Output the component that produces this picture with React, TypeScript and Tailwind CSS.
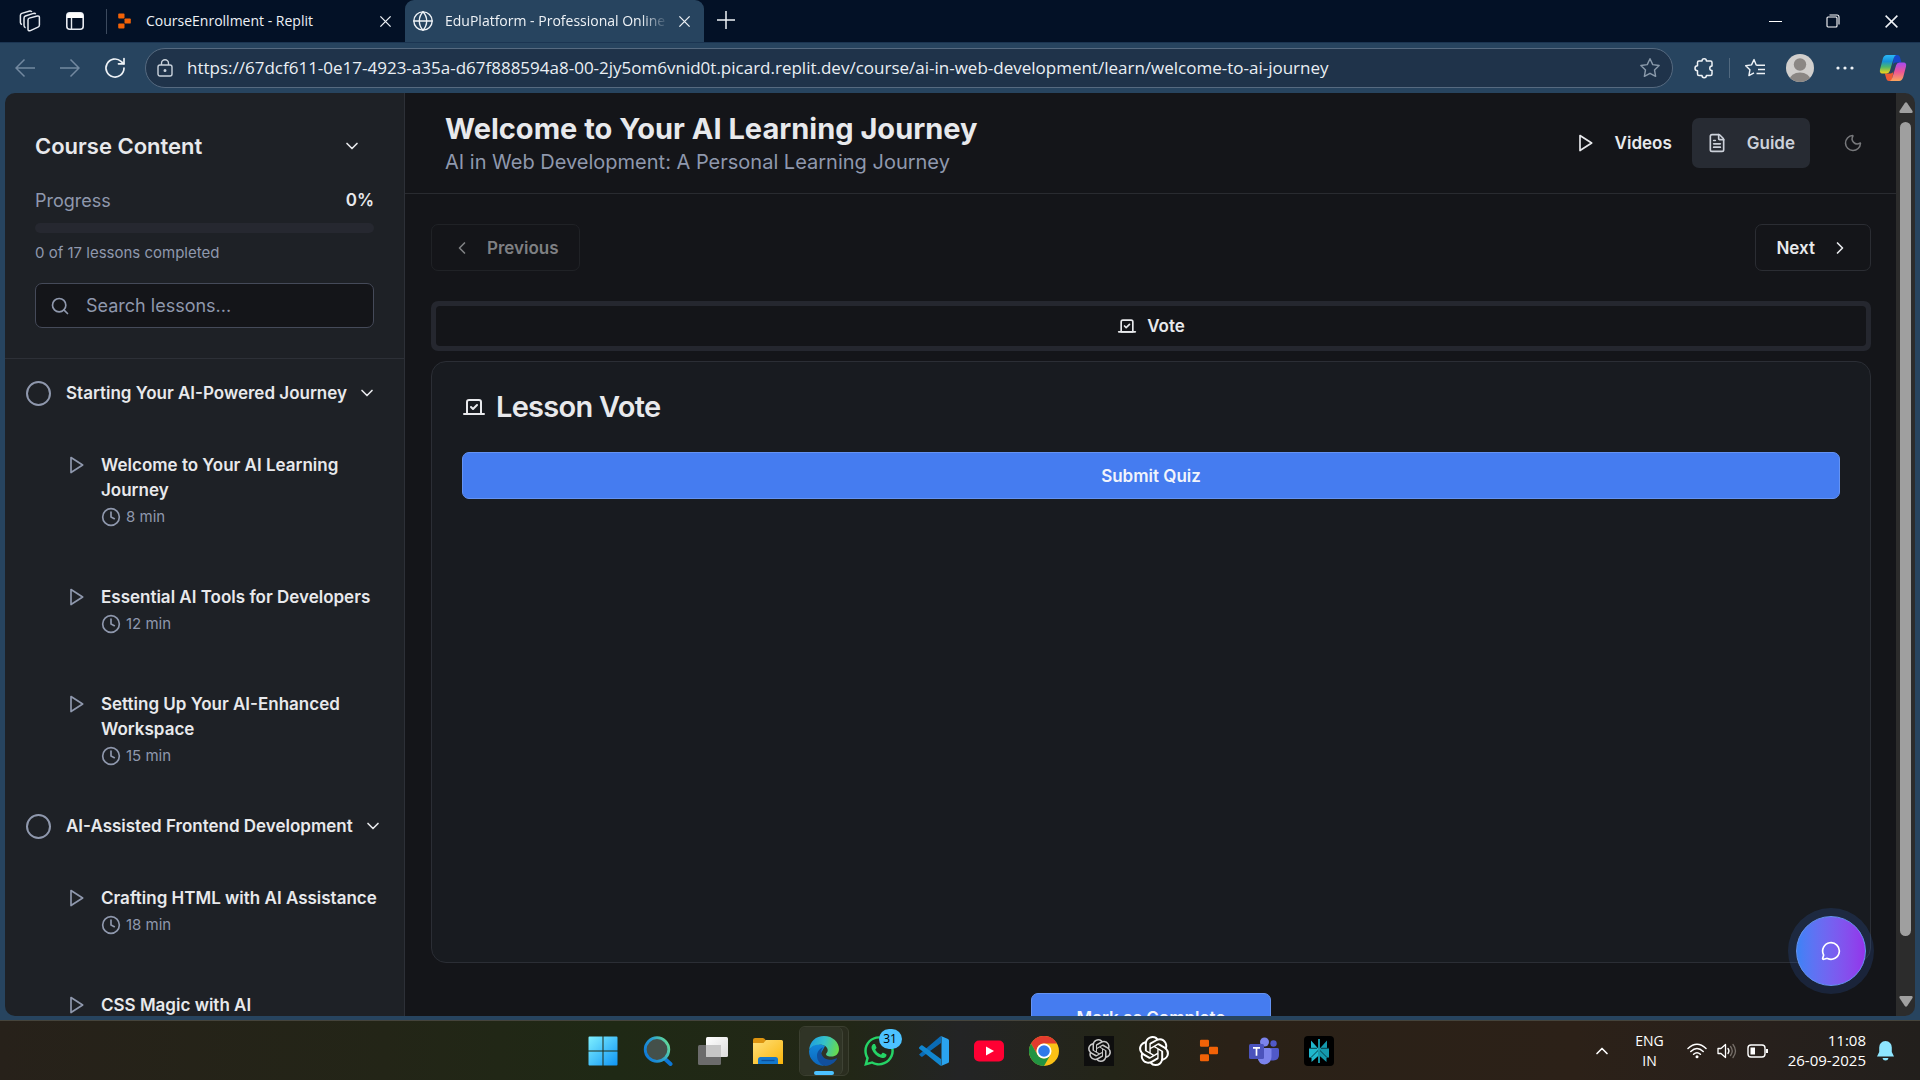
import { useState, type ReactNode } from "react";
import { Vote, Search, Clock, ChevronDown, ChevronLeft, ChevronRight, ChevronUp, FileText, MessageCircle, Globe, Moon } from "lucide-react";
import { SiOpenai } from "react-icons/si";
import { FaWhatsapp } from "react-icons/fa";

const ui = "font-['Open_Sans','Noto_Sans',sans-serif]";

function PlayIcon({ className = "" }: { className?: string }) {
  return (
    <svg viewBox="0 0 24 24" fill="none" stroke="currentColor" strokeWidth="2" strokeLinecap="round" strokeLinejoin="round" className={`size-5 shrink-0 ${className}`}>
      <polygon points="6 3 20 12 6 21 6 3" />
    </svg>
  );
}

function ReplitIcon({ className = "" }: { className?: string }) {
  return (
    <svg viewBox="0 0 24 28" fill="#f26207" className={className}>
      <rect x="1" y="1" width="11" height="8.5" rx="1.5" />
      <rect x="12" y="9.5" width="11" height="9" rx="1.5" />
      <rect x="1" y="18.5" width="11" height="8.5" rx="1.5" />
    </svg>
  );
}

function WorkspacesIcon() {
  return (
    <svg viewBox="0 0 22 22" fill="none" stroke="#e6eaf0" strokeWidth="1.5" strokeLinejoin="round" className="size-[22px]">
      <path d="M9 10 Q9 8.6 10.3 8.1L18.2 6Q20.4 5.6 20.4 7.6V15Q20.4 16.6 19 17.1L11.4 20.6Q9 21.4 9 19.2Z" />
      <path d="M6.6 17.8Q5 17.3 5 15.6V8.2Q5 6.6 6.4 6L14.5 3.4Q16.2 3 16.6 4.2" />
      <path d="M3 14.6Q1.4 14 1.4 12.6V5.4Q1.4 4 2.8 3.4L10.8 1Q12.3 .7 12.8 2" />
    </svg>
  );
}

function TabPaneIcon() {
  return (
    <svg viewBox="0 0 20 20" className="size-5">
      <rect x="1.8" y="1.8" width="16.4" height="16.4" rx="3" fill="none" stroke="#e6eaf0" strokeWidth="1.6" />
      <path d="M2 4.5Q2 2 4.5 2h11Q18 2 18 4.5V7H2Z" fill="#fff" />
      <path d="M6.5 7v11" stroke="#e6eaf0" strokeWidth="1.4" />
    </svg>
  );
}

function CloseIcon({ className = "" }: { className?: string }) {
  return (
    <svg viewBox="0 0 14 14" fill="none" stroke="#eef2f6" strokeWidth="1.4" className={className}>
      <path d="M1.5 1.5 12.5 12.5M12.5 1.5 1.5 12.5" />
    </svg>
  );
}

function CopilotIcon() {
  return (
    <svg viewBox="0 0 28 28" className="size-7">
      <defs>
        <linearGradient id="cpA" x1="0" y1="0" x2="0" y2="1">
          <stop offset="0" stopColor="#2bb8f5" />
          <stop offset=".35" stopColor="#1691d8" />
          <stop offset=".65" stopColor="#4db86b" />
          <stop offset="1" stopColor="#f4d418" />
        </linearGradient>
        <linearGradient id="cpB" x1="0" y1="0" x2="0" y2="1">
          <stop offset="0" stopColor="#a64af0" />
          <stop offset=".5" stopColor="#ec5596" />
          <stop offset="1" stopColor="#fba65c" />
        </linearGradient>
      </defs>
      <path d="M15 1h3.2q2 0 2.7 2l1.6 5.4h-5.6q-2.3 0-3 2.3Z" fill="#1747c8" />
      <path d="M13 27H10q-2 0-2.6-2l-1.6-5.4h5.6q2.3 0 3-2.3Z" fill="#ee5a34" />
      <path d="M7.8 1h9.4q-1.7.6-2.5 3.2l-3.8 12.6q-.8 2.6-3.4 2.6H3.2q-3-.3-2.2-4L3.8 4.7Q5 1 7.8 1Z" fill="url(#cpA)" />
      <path d="M20.2 27h-9.4q1.7-.6 2.5-3.2l3.8-12.6q.8-2.6 3.4-2.6h4.3q3 .3 2.2 4l-2.8 10.7Q23 27 20.2 27Z" fill="url(#cpB)" />
    </svg>
  );
}

function BrowserTabs() {
  return (
    <div className="flex h-[42px] shrink-0 items-stretch bg-[#031126]">
      <div className="flex w-[107px] items-center pl-[19px]">
        <button aria-label="Workspaces"><WorkspacesIcon /></button>
        <button aria-label="Tab actions" className="ml-6"><TabPaneIcon /></button>
        <span className="ml-auto h-[25px] w-px bg-[#3c4a5e]" />
      </div>
      <div className="flex w-[298px] items-center pr-[13px] pl-[10px]">
        <ReplitIcon className="h-4 w-[15px]" />
        <span className="ml-[14px] pb-0.5 text-[14px] text-[#eef2f6]">CourseEnrollment - Replit</span>
        <button aria-label="Close tab" className="ml-auto"><CloseIcon className="size-[13px]" /></button>
      </div>
      <div className="flex w-[299px] items-center rounded-t-[9px] bg-[#27445f] pr-[13px] pl-[7px]">
        <Globe className="size-[22px] shrink-0 text-[#eef2f6]" strokeWidth={1.5} />
        <span className="ml-[11px] min-w-0 flex-1 overflow-hidden pb-0.5 text-[14px] whitespace-nowrap text-[#eef2f6] [mask-image:linear-gradient(to_right,black_88%,transparent)]">
          EduPlatform - Professional Online
        </span>
        <button aria-label="Close tab" className="ml-[10px]"><CloseIcon className="size-[13px]" /></button>
      </div>
      <button aria-label="New tab" className="flex w-[43px] items-center justify-center pb-0.5">
        <svg viewBox="0 0 18 18" stroke="#eef2f6" strokeWidth="1.5" className="size-[18px]"><path d="M9 0v18M0 9h18" /></svg>
      </button>
      <div className="ml-auto flex">
        <button aria-label="Minimize" className="flex w-[58px] items-center justify-center">
          <span className="h-px w-[13px] bg-white" />
        </button>
        <button aria-label="Restore" className="flex w-[58px] items-center justify-center">
          <svg viewBox="0 0 14 14" fill="none" stroke="#fff" strokeWidth="1.1" className="size-[14px]">
            <rect x="1" y="3" width="10" height="10" rx="1" />
            <path d="M3.5 1H11Q13 1 13 3v7.5" />
          </svg>
        </button>
        <button aria-label="Close" className="flex w-[58px] items-center justify-center">
          <CloseIcon className="size-[15px]" />
        </button>
      </div>
    </div>
  );
}

const starPath = "M10 1.6l2.5 5.3 5.8.8-4.2 4.1 1 5.8L10 14.8l-5.1 2.8 1-5.8L1.7 7.7l5.8-.8Z";

function AddressBar() {
  const [url, setUrl] = useState("https://67dcf611-0e17-4923-a35a-d67f888594a8-00-2jy5om6vnid0t.picard.replit.dev/course/ai-in-web-development/learn/welcome-to-ai-journey");
  return (
    <div className="flex h-[51px] shrink-0 items-center border-t border-[#1b3552] bg-[#27445f]">
      <button aria-label="Back" className="flex w-[46px] justify-center pl-1">
        <svg viewBox="0 0 20 20" fill="none" stroke="#7389a0" strokeWidth="1.5" className="size-5"><path d="M20 10H1M9.500 1.500 1 10l8.500 8.500" /></svg>
      </button>
      <button aria-label="Forward" className="flex w-[47px] justify-center">
        <svg viewBox="0 0 20 20" fill="none" stroke="#7389a0" strokeWidth="1.5" className="size-5"><path d="M0 10h19M10.500 1.500 19 10l-8.500 8.500" /></svg>
      </button>
      <button aria-label="Refresh" className="flex w-11 justify-center">
        <svg viewBox="0 0 22 22" fill="none" stroke="#eef2f6" strokeWidth="1.7" strokeLinecap="round" className="size-[22px]">
          <path d="M20 11a9 9 0 1 1-3-6.700L19.500 6.500" /><path d="M20 1.500v5.300h-5.500" />
        </svg>
      </button>
      <div className="ml-2 flex h-10 flex-1 items-center rounded-full border border-[#566a80] bg-[#1f334a] pr-[11px] pl-[11px]">
        <svg viewBox="0 0 16 18" fill="none" stroke="#c9d2dc" strokeWidth="1.4" className="h-[18px] w-4 shrink-0">
          <rect x="1" y="6" width="14" height="11" rx="2" /><path d="M4.500 6V4.200a3.500 3.500 0 0 1 7 0V6" /><circle cx="8" cy="11.500" r=".8" fill="#c9d2dc" />
        </svg>
        <input aria-label="Address" value={url} onChange={(e) => setUrl(e.target.value)} className="ml-[14px] min-w-0 flex-1 bg-transparent text-[17px] text-[#eaeff4] outline-none" />
        <button aria-label="Add to favorites">
          <svg viewBox="0 0 20 20" fill="none" stroke="#8a9aab" strokeWidth="1.3" strokeLinejoin="round" className="size-[22px]"><path d={starPath} /></svg>
        </button>
      </div>
      <div className="flex items-center">
        <button aria-label="Extensions" className="ml-5">
          <svg viewBox="0 0 22 22" fill="none" stroke="#eef2f6" strokeWidth="1.5" strokeLinejoin="round" className="size-[22px]">
            <path d="M9 4a2.200 2.200 0 0 1 4.400 0H17.500q1.500 0 1.500 1.500V9a2.200 2.200 0 1 0 0 4.500V17q0 1.500-1.500 1.500H13.400a2.200 2.200 0 0 1-4.400 0H6Q4.500 18.500 4.500 17v-3.200a2.500 2.500 0 0 1 0-5V5.500Q4.500 4 6 4Z" />
          </svg>
        </button>
        <span className="ml-[14px] h-5 w-px bg-[#51697f]" />
        <button aria-label="Favorites" className="ml-[14px]">
          <svg viewBox="0 0 22 20" fill="none" stroke="#eef2f6" strokeWidth="1.4" strokeLinejoin="round" className="h-5 w-[22px]">
            <path d="M13 7.200l-.8-.3L10 1.600 7.500 6.900l-5.800.8 4.200 4.100-1 5.800L10 14.800M12.500 7.200H21M14 11.500h7M12.500 15.500H21" />
          </svg>
        </button>
        <button aria-label="Profile" className="ml-5">
          <svg viewBox="0 0 28 28" className="size-7">
            <clipPath id="av"><circle cx="14" cy="14" r="14" /></clipPath>
            <g clipPath="url(#av)"><rect width="28" height="28" fill="#d1cfcd" /><circle cx="14" cy="10.500" r="6.200" fill="#8b8784" /><ellipse cx="14" cy="26" rx="10.500" ry="7.500" fill="#8b8784" /></g>
          </svg>
        </button>
        <button aria-label="Settings and more" className="ml-[22px]">
          <svg viewBox="0 0 18 4" fill="#eef2f6" className="h-1 w-[18px]"><circle cx="2" cy="2" r="1.600" /><circle cx="9" cy="2" r="1.600" /><circle cx="16" cy="2" r="1.600" /></svg>
        </button>
        <button aria-label="Copilot" className="mr-[13px] ml-[25px]"><CopilotIcon /></button>
      </div>
    </div>
  );
}

const sections = [
  {
    title: "Starting Your AI-Powered Journey",
    lessons: [
      { title: "Welcome to Your AI Learning Journey", time: "8 min" },
      { title: "Essential AI Tools for Developers", time: "12 min" },
      { title: "Setting Up Your AI-Enhanced Workspace", time: "15 min" },
    ],
  },
  {
    title: "AI-Assisted Frontend Development",
    lessons: [
      { title: "Crafting HTML with AI Assistance", time: "18 min" },
      { title: "CSS Magic with AI", time: "20 min" },
    ],
  },
];

function Sidebar() {
  return (
    <aside className="flex w-[400px] shrink-0 flex-col overflow-hidden border-r border-[#2d3037] bg-[#1e2126]">
      <div className="border-b border-[#2d3037] px-[30px] pt-[30px] pb-[30px]">
        <div className="flex h-[45px] items-center justify-between">
          <h2 className="pt-0.5 text-[22px] font-semibold">Course Content</h2>
          <button aria-label="Collapse course content" className="mr-3"><ChevronDown className="size-5" /></button>
        </div>
        <div className="mt-5 flex items-center justify-between leading-[25px]">
          <span className="text-[18px] text-[#8f98ad]">Progress</span>
          <span className="text-[17px] font-semibold">0%</span>
        </div>
        <div role="progressbar" aria-label="Progress" aria-valuenow={0} className="mt-[10px] h-[10px] rounded-full bg-[#262830]" />
        <p className="mt-[10px] text-[15px] leading-5 text-[#8f98ad]">0 of 17 lessons completed</p>
        <label className="mt-5 flex h-[45px] items-center rounded-[7px] border border-[#454a59] bg-[#141519] pl-[14px]">
          <Search className="size-5 shrink-0 text-[#8f98ad]" />
          <input aria-label="Search lessons" placeholder="Search lessons..." className="ml-4 min-w-0 flex-1 bg-transparent text-[18px] outline-none placeholder:text-[#8f98ad]" />
        </label>
      </div>
      <nav className="pt-[3px]">
        {sections.map((s) => (
          <section key={s.title}>
            <button className="flex h-[62px] w-full items-center pl-[21px] text-left">
              <span className="size-[25px] shrink-0 rounded-full border-2 border-[#8f98ad]" />
              <span className="ml-[15px] pt-0.5 text-[17px] font-semibold whitespace-nowrap">{s.title}</span>
              <ChevronDown className="ml-[10px] size-5 shrink-0" />
            </button>
            {s.lessons.map((l) => (
              <a key={l.title} href="#lesson" className="flex pt-[29px] pr-4 pb-[29px] pl-[61px]">
                <PlayIcon className="mt-[2px] text-[#8f98ad]" />
                <span className="ml-[15px]">
                  <span className="block text-[17px] leading-[25px] font-semibold">{l.title}</span>
                  <span className="mt-1 flex items-center gap-[5px] text-[15px] leading-5 text-[#8f98ad]">
                    <Clock className="size-5" />
                    {l.time}
                  </span>
                </span>
              </a>
            ))}
          </section>
        ))}
      </nav>
    </aside>
  );
}

function Main() {
  return (
    <main className="flex min-w-0 flex-1 flex-col overflow-hidden bg-[#141519]">
      <header className="flex h-[101px] shrink-0 items-center justify-between border-b border-[#292b30] pr-5 pl-10">
        <div className="pt-[3px]">
          <h1 className="text-[29px] leading-[35px] font-bold">Welcome to Your AI Learning Journey</h1>
          <p className="text-[20px] leading-8 text-[#8f98ad]">AI in Web Development: A Personal Learning Journey</p>
        </div>
        <div className="flex items-center text-[17px] font-semibold">
          <button className="flex h-[50px] items-center gap-5 px-5"><PlayIcon /> <span className="pt-0.5">Videos</span></button>
          <button className="flex h-[50px] items-center gap-5 rounded-[7px] bg-[#272b33] px-[15px] text-[#ccd1da]"><FileText className="size-5" /> <span className="pt-0.5">Guide</span></button>
          <button aria-label="Toggle theme" className="ml-5 flex h-[50px] w-[46px] items-center justify-center text-[#77787b]"><Moon className="size-5" strokeWidth={1.8} /></button>
        </div>
      </header>
      <div className="flex flex-col px-[25px] py-[30px] pl-[26px]">
        <div className="flex items-center justify-between text-[17px] font-semibold">
          <button disabled className="flex h-[47px] items-center gap-[15px] rounded-[7px] border border-[#202226] px-5 text-[#7f8083]"><ChevronLeft className="size-5" /> <span className="pt-0.5">Previous</span></button>
          <button className="flex h-[47px] items-center gap-[15px] rounded-[7px] border border-[#2b2d33] px-5"><span className="pt-0.5">Next</span> <ChevronRight className="size-5" /></button>
        </div>
        <div role="tablist" className="mt-[30px] flex rounded-[7px] bg-[#25272f] p-[5px]">
          <button role="tab" aria-selected="true" className="flex h-10 flex-1 items-center justify-center gap-[10px] rounded-[4px] bg-[#141519] text-[17px] font-semibold">
            <Vote className="size-5" /> <span className="pt-0.5">Vote</span>
          </button>
        </div>
        <section className="mt-[10px] min-h-[602px] rounded-[15px] border border-[#2b2e35] bg-[#181b20] px-[30px] py-[30px]">
          <h2 className="flex h-[30px] items-center gap-[10px] text-[29px] font-semibold tracking-tight"><Vote className="size-6" /> Lesson Vote</h2>
          <button className="mt-[30px] h-[47px] w-full rounded-[7px] border border-[#6593f3] bg-[#457cf0] pt-0.5 text-[17px] font-semibold text-[#f1f4fb]">Submit Quiz</button>
        </section>
        <button className="mt-[30px] h-[47px] w-60 shrink-0 self-center rounded-[7px] border border-[#6593f3] bg-[#457cf0] pt-1 text-[17px] font-semibold text-[#f1f4fb]">Mark as Complete</button>
      </div>
    </main>
  );
}

function Scrollbar() {
  return (
    <div className="flex w-[19px] shrink-0 flex-col items-center bg-[#2c2c2c] pt-[9px] pb-[9px]">
      <svg viewBox="0 0 14 11" fill="#a0a0a0" className="h-[11px] w-[14px]"><path d="M5.800 1Q7-.6 8.200 1L13.500 9Q14 11 12.500 11H1.500Q0 11 .5 9Z" /></svg>
      <span className="mt-[9px] w-[11px] flex-1 rounded-full bg-[#9f9f9f]" />
      <svg viewBox="0 0 14 11" fill="#a0a0a0" className="mt-[60px] h-[11px] w-[14px] rotate-180"><path d="M5.800 1Q7-.6 8.200 1L13.500 9Q14 11 12.500 11H1.500Q0 11 .5 9Z" /></svg>
    </div>
  );
}

function WindowsIcon() {
  return (
    <svg viewBox="0 0 30 30" className="size-[30px]">
      <defs><linearGradient id="win" x1="0" y1="0" x2="1" y2="1"><stop offset="0" stopColor="#7ff0ff" /><stop offset="1" stopColor="#0f95f5" /></linearGradient></defs>
      <path fill="url(#win)" d="M.5 1.500q0-1 1-1H14.500v14H.5ZM15.500.5h13q1 0 1 1v13h-14ZM.5 15.500h14v14h-13q-1 0-1-1ZM15.500 15.500h14v13q0 1-1 1h-13Z" />
    </svg>
  );
}

function TaskSearchIcon() {
  return (
    <svg viewBox="0 0 30 30" fill="none" className="size-[30px]">
      <defs><linearGradient id="srch" x1="0" y1=".7" x2="1" y2=".2"><stop offset="0" stopColor="#0f7bd8" /><stop offset=".5" stopColor="#2a9fd0" /><stop offset="1" stopColor="#66dd96" /></linearGradient></defs>
      <path d="M21.500 22.500 27.500 28" stroke="#0d77d6" strokeWidth="4" strokeLinecap="round" />
      <circle cx="14" cy="13.500" r="11.800" fill="#44504a" stroke="url(#srch)" strokeWidth="2.800" />
    </svg>
  );
}

function TaskViewIcon() {
  return (
    <svg viewBox="0 0 30 30" className="size-[30px]">
      <defs><linearGradient id="tv" x1="0" y1="0" x2="1" y2="1"><stop offset="0" stopColor="#fff" /><stop offset="1" stopColor="#dcdcdc" /></linearGradient></defs>
      <rect x="0" y="9" width="23" height="20" rx="1.500" fill="#6b6b6b" />
      <rect x="8" y="1" width="22" height="20" rx="1.500" fill="url(#tv)" />
      <path d="M8 9h15v12H9.500Q8 21 8 19.500Z" fill="#c6c6c6" />
    </svg>
  );
}

function FolderIcon() {
  return (
    <svg viewBox="0 0 30 30" className="size-[30px]">
      <defs><linearGradient id="fold" x1="0" y1="0" x2="1" y2="1"><stop offset="0" stopColor="#ffe07a" /><stop offset="1" stopColor="#f9b50a" /></linearGradient></defs>
      <path d="M0 4q0-2 2-2h8q1.500 0 3 2.500L14 7H0Z" fill="#dd9410" />
      <path d="M0 7h10.500L13 4h15.500q1.500 0 1.500 1.500V28H0Z" fill="url(#fold)" />
      <path d="M5 28v-4.500Q5 21 7.500 21h15q2.500 0 2.500 2.500V28Z" fill="#1478cc" />
      <path d="M8.500 24.500h13" stroke="#0b4f9c" strokeWidth="1.300" />
    </svg>
  );
}

function EdgeIcon() {
  return (
    <svg viewBox="0 0 30 30" className="size-[30px]">
      <defs>
        <linearGradient id="edT" x1="0" y1=".3" x2="1" y2=".5"><stop offset="0" stopColor="#1d9de2" /><stop offset=".5" stopColor="#35c1c8" /><stop offset="1" stopColor="#68dc4c" /></linearGradient>
        <linearGradient id="edB" x1="0" y1="0" x2="0" y2="1"><stop offset="0" stopColor="#1288dc" /><stop offset="1" stopColor="#0d65ba" /></linearGradient>
      </defs>
      <path d="M0 15A15 15 0 0 0 15 30Q11 27 10.500 20L16 10Q10 6.500 5 9 1 11 0 15Z" fill="url(#edB)" />
      <path d="M0 14.500C.8 5 7 0 15 0 24 0 30 6.500 30 13c0 5-3.500 7.500-7.500 7.500-3 0-5.500-.8-5.500-2.300 0-.8 1.700-1.600 1.700-4C18.700 11 15 8.600 10.500 8.600 5 8.600 1.200 11.500 0 14.500Z" fill="url(#edT)" />
      <path d="M14.500 11.200C10.500 12.200 8 16 8 19.500 8 25 12 29.500 16.500 29.900 21.500 29.700 25.500 27 27.800 23.300 28.200 22.500 27.600 22 26.800 22.400 25 23.300 23 23.700 21 23.700 16 23.700 12.300 20.300 12.300 16 12.300 14 13.100 12.300 14.500 11.200Z" fill="#114f9c" />
    </svg>
  );
}

function VsCodeIcon() {
  return (
    <svg viewBox="0 0 30 30" className="size-[30px]">
      <path d="M0 18.500 2 20.500Q2.800 21 3.600 20.500L22 7V.3Q21 .3 20.500 1L0 18.500Z" fill="#0a6bb5" />
      <path d="M0 11.500 2 9.500Q2.800 9 3.600 9.500L22 23v6.700q-1 0-1.500-.7L0 12.500Z" fill="#1186cf" />
      <path d="M22 0 29 3q1 .5 1 1.500v21q0 1-1 1.500l-7 3q.5-.5.500-2V2q0-1.500-.500-2Z" fill="#2aa3ef" />
    </svg>
  );
}

function YoutubeIcon() {
  return (
    <svg viewBox="0 0 30 22" className="h-[22px] w-[30px]"><rect y=".5" width="30" height="21" rx="5" fill="#ff0033" /><path d="M12 6.500 20 11l-8 4.500Z" fill="#fff" /></svg>
  );
}

function ChromeIcon() {
  return (
    <svg viewBox="0 0 30 30" className="size-[30px]">
      <circle cx="15" cy="15" r="15" fill="#fbc116" />
      <path d="M2 7.500A15 15 0 0 1 28 7.500H15A7.500 7.500 0 0 0 8.500 18.750Z" fill="#e33b2e" />
      <path d="M2 7.500 8.500 18.750A7.500 7.500 0 0 0 21.500 18.750L15 30A15 15 0 0 1 2 7.500Z" fill="#229342" />
      <circle cx="15" cy="15" r="7.500" fill="#fff" />
      <circle cx="15" cy="15" r="5.800" fill="#3079ea" />
    </svg>
  );
}

function TeamsIcon() {
  return (
    <svg viewBox="0 0 30 28" className="h-7 w-[30px]">
      <circle cx="24.500" cy="6.500" r="3.200" fill="#5059c9" />
      <path d="M22 11h6.500q1.500 0 1.500 1.500V18q0 5-5.500 5.500H22Z" fill="#5059c9" />
      <circle cx="15.500" cy="5" r="4.500" fill="#7b83eb" />
      <path d="M9 11h12q1.500 0 1.500 1.500V20q-.5 7-7 7.500-6-.5-7-7Z" fill="#7b83eb" />
      <rect y="7" width="15" height="15" rx="1.500" fill="#4b53bc" />
      <path d="M4 10.800h7M7.500 10.800v8" stroke="#fff" strokeWidth="1.700" />
    </svg>
  );
}

function PerplexityIcon() {
  return (
    <svg viewBox="0 0 30 30" className="size-[30px]">
      <rect width="30" height="30" rx="4" fill="#000" />
      <path d="M14.200 12.500 7 4.500V12H5v9.500h2.500V26l6.700-6Z" fill="#1fb8cd" />
      <path d="M15.800 12.500 23 4.500V12H25v9.500h-2.500V26l-6.700-6Z" fill="#1499ad" />
      <path d="M15 13.500 7.500 21M15 13.500 22.500 21M5 12.300h8M17 12.300h8" stroke="#07414c" strokeWidth="1" />
      <path d="M15 3v24" stroke="#1fb8cd" strokeWidth="1.600" />
    </svg>
  );
}

function TaskButton({ label, children }: { label: string; children: ReactNode }) {
  return <button aria-label={label} className="flex h-[50px] w-[55px] items-center justify-center">{children}</button>;
}

function Taskbar() {
  return (
    <footer className="grid h-[60px] shrink-0 grid-cols-[1fr_auto_1fr] items-center border-t border-[#45443c] bg-[linear-gradient(to_right,#27211a_0%,#232517_20%,#1f2915_32%,#222716_44%,#232425_50%,#242518_58%,#2a2117_64%,#2c2118_82%,#27201c_92%,#221f1c_100%)] text-white">
      <span />
      <div className="flex items-center pl-0.5">
        <TaskButton label="Start"><WindowsIcon /></TaskButton>
        <TaskButton label="Search"><TaskSearchIcon /></TaskButton>
        <TaskButton label="Task view"><TaskViewIcon /></TaskButton>
        <TaskButton label="File Explorer"><FolderIcon /></TaskButton>
        <button aria-label="Edge" className="relative mx-[3px] flex h-[50px] w-[50px] flex-col items-center justify-end rounded-[6px] border border-[#3b3f30] bg-[#2a2d1f]">
          <span className="absolute inset-y-0 left-0 w-[43px] rounded-[6px] border-r border-[#3f4335] bg-[#303426]" />
          <span className="relative flex flex-col items-center">
            <EdgeIcon />
            <span className="mt-[5px] h-1 w-5 rounded-full bg-[#4cc2ff]" />
          </span>
        </button>
        <button aria-label="WhatsApp" className="relative flex h-[50px] w-[55px] items-center justify-center">
          <FaWhatsapp className="size-[34px] text-[#25d366]" />
          <span className="absolute top-[3px] right-[5px] flex h-5 w-[23px] items-center justify-center rounded-full bg-[#4cc2ff] text-[12px] text-black">31</span>
        </button>
        <TaskButton label="VS Code"><VsCodeIcon /></TaskButton>
        <TaskButton label="YouTube"><YoutubeIcon /></TaskButton>
        <TaskButton label="Chrome"><ChromeIcon /></TaskButton>
        <TaskButton label="ChatGPT app"><span className="flex size-[30px] items-center justify-center bg-[#0e0e0e]"><SiOpenai className="size-[23px] text-[#c9c9c9]" /></span></TaskButton>
        <TaskButton label="ChatGPT"><SiOpenai className="size-[30px]" /></TaskButton>
        <TaskButton label="Replit"><ReplitIcon className="h-[23px] w-5" /></TaskButton>
        <TaskButton label="Teams"><TeamsIcon /></TaskButton>
        <TaskButton label="Perplexity"><PerplexityIcon /></TaskButton>
      </div>
      <div className="flex items-center justify-end pr-[26px] text-[14px] leading-5">
        <button aria-label="Show hidden icons"><ChevronUp className="size-5" /></button>
        <button className="ml-[23px] text-center">ENG<br />IN</button>
        <button aria-label="Network, volume and battery" className="ml-[23px] flex items-center gap-[10px]">
          <svg viewBox="0 0 20 16" fill="none" stroke="#fff" strokeWidth="1.500" strokeLinecap="round" className="h-4 w-5">
            <path d="M1 5.500q9-8.500 18 0M3.800 8.500q6.200-6 12.400 0M6.600 11.300q3.400-3.200 6.800 0" /><circle cx="10" cy="13.800" r="1.500" fill="#fff" stroke="none" />
          </svg>
          <svg viewBox="0 0 20 18" fill="none" stroke="#fff" strokeWidth="1.300" strokeLinecap="round" strokeLinejoin="round" className="h-[18px] w-5">
            <path d="M1 6.500h3L8.500 2.500v13L4 11.500H1Z" /><path d="M11 6.500q2 2.500 0 5" /><path d="M13.500 4.500q3.500 4.500 0 9M16 2.500q5 6.500 0 13" stroke="#77706a" />
          </svg>
          <svg viewBox="0 0 22 14" fill="none" stroke="#fff" strokeWidth="1.400" className="h-[14px] w-[22px]">
            <rect x="1" y="1" width="17" height="12" rx="3" /><rect x="3.500" y="3.500" width="4.500" height="7" fill="#fff" stroke="none" /><path d="M20 5v4" strokeWidth="2" />
          </svg>
        </button>
        <button className="ml-[19px] pb-0.5 text-right text-[15px]">11:08<br />26-09-2025</button>
        <button aria-label="Notifications" className="ml-[11px]">
          <svg viewBox="0 0 17 20" fill="#8ee6ff" className="h-5 w-[17px]"><path d="M8.500 0q6 .5 6.300 6.500v4.500L17 15.500H0L2.200 11V6.500Q2.500.5 8.500 0ZM5.500 17h6q-.5 2.500-3 2.500t-3-2.500Z" /></svg>
        </button>
      </div>
    </footer>
  );
}

export default function App() {
  return (
    <div className={`flex h-screen flex-col overflow-hidden bg-[#27445f] ${ui}`}>
      <BrowserTabs />
      <AddressBar />
      <div className="relative mx-[5px] mb-1 flex min-h-0 flex-1 overflow-hidden rounded-[10px] font-['Inter',sans-serif] text-[#e8e9ec]">
        <Sidebar />
        <Main />
        <Scrollbar />
        <button aria-label="Open chat" className="absolute right-[49px] bottom-[30px] flex size-[70px] items-center justify-center rounded-full border border-[#6593f3] bg-linear-to-r from-[#3b82f6] to-[#9333ea] text-white ring-8 ring-[#3b82f6]/15">
          <MessageCircle className="size-5" />
        </button>
      </div>
      <Taskbar />
    </div>
  );
}
